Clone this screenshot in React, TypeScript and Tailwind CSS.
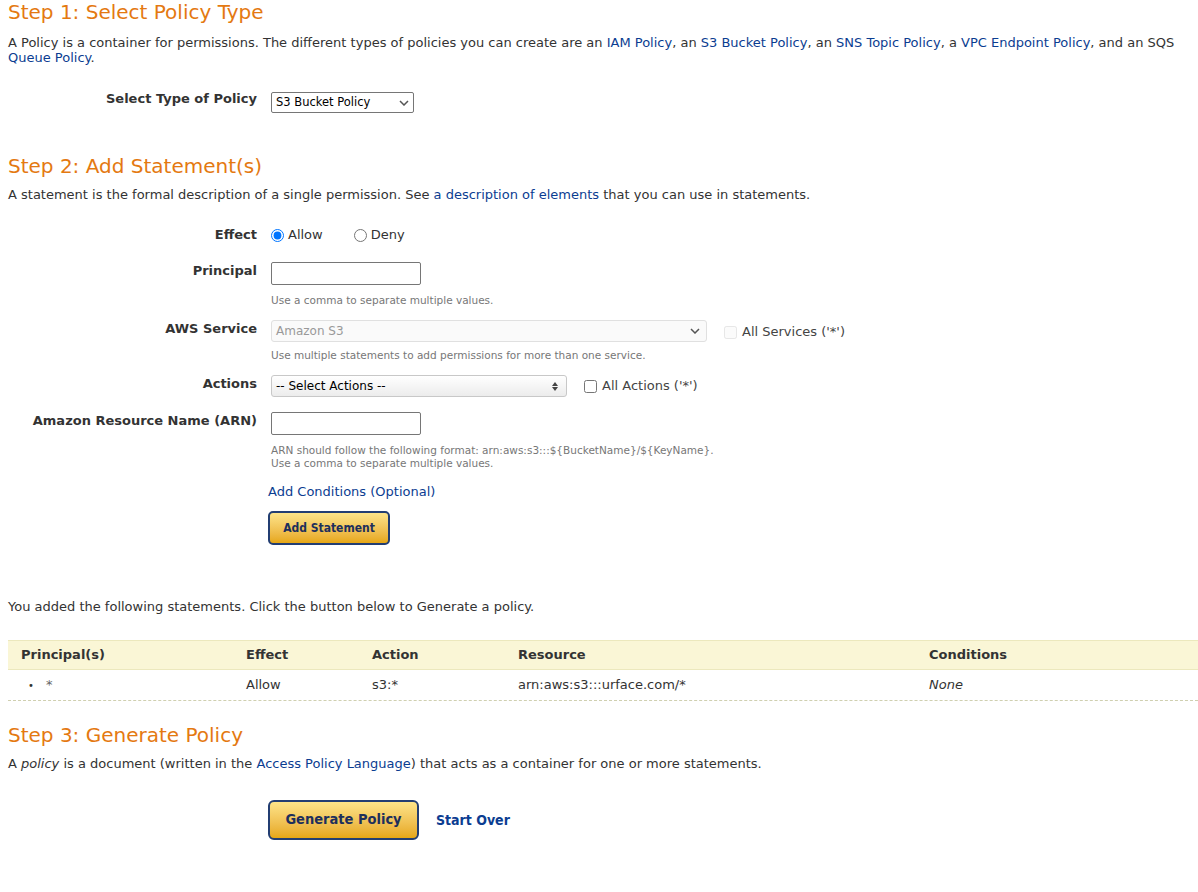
import React from 'react';

const wide = { fontFamily: "'DejaVu Sans', Verdana, sans-serif" };
const narrow = { fontFamily: "'DejaVu Sans Condensed', 'DejaVu Sans', sans-serif", fontStretch: 'condensed' as const };

const Link = ({ children }: { children: React.ReactNode }) => (
    <a href="#" className="text-[#0b3d91] no-underline">{children}</a>
);

const Label = ({ children, className = '' }: { children: React.ReactNode; className?: string }) => (
    <div className={`w-[249px] shrink-0 text-right font-bold text-[#333] leading-[16px] ${className}`}>{children}</div>
);

const Chevron = () => (
    <svg width="10" height="6" viewBox="0 0 10 6" className="shrink-0">
        <path d="M1 1l4 4 4-4" fill="none" stroke="#555" strokeWidth="1.5" />
    </svg>
);

const UpDown = () => (
    <svg width="6" height="9" viewBox="0 0 6 9" className="shrink-0">
        <path d="M0 4L3 0 6 4Z M0 5L3 9 6 5Z" fill="#444" />
    </svg>
);

const Heading = ({ children, className = '' }: { children: React.ReactNode; className?: string }) => (
    <h2 className={`text-[20px] leading-[24px] text-[#e47911] font-normal ${className}`}>{children}</h2>
);

const Hint = ({ children, className = '' }: { children: React.ReactNode; className?: string }) => (
    <div className={`text-[10.5px] leading-[13px] text-[#777] ${className}`}>{children}</div>
);

export default function App() {
    return (
        <div className="w-[1198px] min-h-[892px] bg-white pl-2 text-[13px] text-[#333] overflow-hidden" style={wide}>
            {/* step 1 */}
            <Heading>Step 1: Select Policy Type</Heading>
            <p className="mt-[11px] leading-[15px] pr-2">
                A Policy is a container for permissions. The different types of policies you can create are an <Link>IAM Policy</Link>, an <Link>S3 Bucket Policy</Link>, an <Link>SNS Topic Policy</Link>, a <Link>VPC Endpoint Policy</Link>, and an SQS <Link>Queue Policy</Link>.
            </p>
            <div className="flex items-start mt-[26px]">
                <Label>Select Type of Policy</Label>
                <div className="ml-[14px] mt-[1px] w-[143px] h-[21px] border border-[#767676] rounded-[2px] flex items-center justify-between px-[4px] text-[11.5px] text-black">
                    <span>S3 Bucket Policy</span>
                    <Chevron />
                </div>
            </div>

            {/* step 2 */}
            <Heading className="mt-[41px]">Step 2: Add Statement(s)</Heading>
            <p className="mt-[9px] leading-[15px]">
                A statement is the formal description of a single permission. See <Link>a description of elements</Link> that you can use in statements.
            </p>

            <div className="flex items-center mt-[25px] h-[16px]">
                <Label>Effect</Label>
                <label className="ml-[14px] flex items-center gap-[4px]">
                    <input type="radio" name="effect" defaultChecked className="m-0 w-[13px] h-[13px]" /> Allow
                </label>
                <label className="ml-[31px] flex items-center gap-[4px]">
                    <input type="radio" name="effect" className="m-0 w-[13px] h-[13px]" /> Deny
                </label>
            </div>

            <div className="flex items-start mt-[19px]">
                <Label className="pt-px">Principal</Label>
                <div className="ml-[14px]">
                    <div className="w-[150px] h-[23px] border border-[#767676] rounded-[2px]" />
                    <Hint className="mt-[9px]">Use a comma to separate multiple values.</Hint>
                </div>
            </div>

            <div className="flex items-start mt-[13px]">
                <Label className="pt-[1px]">AWS Service</Label>
                <div className="ml-[14px]">
                    <div className="flex items-center">
                        <div className="w-[436px] h-[22px] border border-[#e0e0e0] rounded-[3px] bg-[#fafafa] flex items-center justify-between pl-[4px] pr-[6px] text-[12px] text-[#999]">
                            <span>Amazon S3</span>
                            <Chevron />
                        </div>
                        <label className="ml-[17px] mt-[2px] flex items-center gap-[5px] text-[#444]">
                            <input type="checkbox" disabled className="m-0 w-[13px] h-[13px] opacity-50" /> All Services ('*')
                        </label>
                    </div>
                    <Hint className="mt-[7px]">Use multiple statements to add permissions for more than one service.</Hint>
                </div>
            </div>

            <div className="flex items-start mt-[13px]">
                <Label className="pt-[1px]">Actions</Label>
                <div className="ml-[14px] flex items-center">
                    <div className="w-[296px] h-[22px] border border-[#c8c8c8] rounded-[3px] bg-gradient-to-b from-white to-[#ececec] flex items-center justify-between pl-[4px] pr-[8px] text-[12px] text-black">
                        <span>-- Select Actions --</span>
                        <UpDown />
                    </div>
                    <label className="ml-[17px] flex items-center gap-[5px] text-[#444]">
                        <input type="checkbox" className="m-0 w-[13px] h-[13px]" /> All Actions ('*')
                    </label>
                </div>
            </div>

            <div className="flex items-start mt-[15px]">
                <Label className="pt-[1px]">Amazon Resource Name (ARN)</Label>
                <div className="ml-[14px]">
                    <div className="w-[150px] h-[23px] border border-[#767676] rounded-[2px]" />
                    <Hint className="mt-[9px]">
                        ARN should follow the following format: arn:aws:s3:::${'{'}BucketName{'}'}/${'{'}KeyName{'}'}.<br />
                        Use a comma to separate multiple values.
                    </Hint>
                    <div className="mt-[14px] -ml-[3px] leading-[16px] text-[13px]"><Link>Add Conditions (Optional)</Link></div>
                    <button className="mt-[11px] -ml-[3px] w-[122px] h-[34px] rounded-[5px] border-2 border-[#233e72] bg-gradient-to-b from-[#fde488] to-[#e6a711] text-[#1d2f5c] font-bold text-[12px]" style={narrow}>
                        Add Statement
                    </button>
                </div>
            </div>

            <p className="mt-[54px] leading-[16px]">You added the following statements. Click the button below to Generate a policy.</p>

            <div className="mt-[25px] w-[1190px]">
                <div className="flex items-center h-[30px] bg-[#faf6d6] border-t border-b border-[#ece8bd] font-bold text-[#333]">
                    <div className="w-[238px] pl-[13px]">Principal(s)</div>
                    <div className="w-[126px]">Effect</div>
                    <div className="w-[146px]">Action</div>
                    <div className="w-[411px]">Resource</div>
                    <div className="flex-1">Conditions</div>
                </div>
                <div className="flex items-center h-[31px] border-b border-dashed border-[#cfcfb0] text-[#333]">
                    <div className="w-[238px] pl-[20px] flex items-center gap-[12px]"><span className="text-[10px]">•</span><span className="text-[#666]">*</span></div>
                    <div className="w-[126px]">Allow</div>
                    <div className="w-[146px]">s3:*</div>
                    <div className="w-[411px]">arn:aws:s3:::urface.com/*</div>
                    <div className="flex-1 italic">None</div>
                </div>
            </div>

            {/* step 3 */}
            <Heading className="mt-[22px]">Step 3: Generate Policy</Heading>
            <p className="mt-[9px] leading-[16px]">
                A <i>policy</i> is a document (written in the <Link>Access Policy Language</Link>) that acts as a container for one or more statements.
            </p>
            <div className="mt-[28px] flex items-center ml-[260px]">
                <button className="w-[151px] h-[40px] rounded-[6px] border-2 border-[#233e72] bg-gradient-to-b from-[#fde488] to-[#e6a711] text-[#1d2f5c] font-bold text-[14.5px]" style={narrow}>
                    Generate Policy
                </button>
                <a href="#" className="ml-[17px] font-bold text-[#0b3d91] text-[14px]" style={narrow}>Start Over</a>
            </div>
        </div>
    );
}
